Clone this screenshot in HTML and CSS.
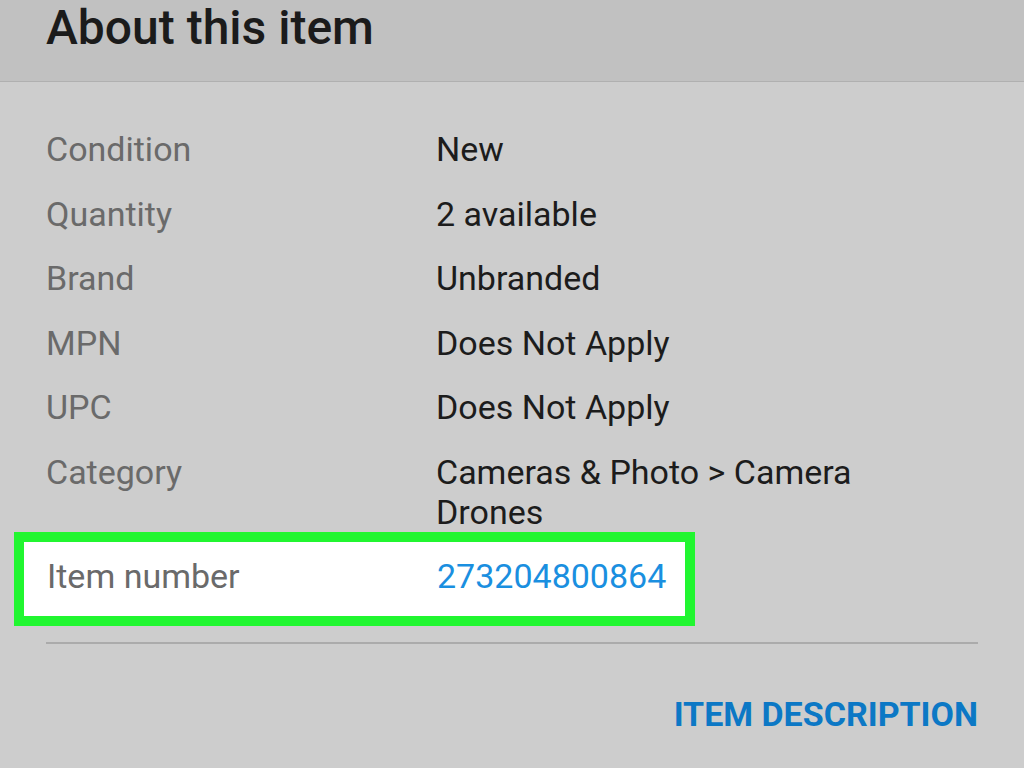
FILE: index.html
```html
<!DOCTYPE html>
<html lang="en">
<head>
  <meta charset="UTF-8" />
  <title>About this item</title>
  <link rel="stylesheet" href="styles.css">
</head>
<body>
  <header class="top-bar">
    <h1>About this item</h1>
  </header>

  <main class="details">
    <div class="specs">
      <div class="row">
        <span class="label">Condition</span>
        <span class="value">New</span>
      </div>
      <div class="row">
        <span class="label">Quantity</span>
        <span class="value">2 available</span>
      </div>
      <div class="row">
        <span class="label">Brand</span>
        <span class="value">Unbranded</span>
      </div>
      <div class="row">
        <span class="label">MPN</span>
        <span class="value">Does Not Apply</span>
      </div>
      <div class="row">
        <span class="label">UPC</span>
        <span class="value">Does Not Apply</span>
      </div>
      <div class="row">
        <span class="label">Category</span>
        <span class="value">Cameras &amp; Photo &gt; Camera Drones</span>
      </div>
      <div class="row highlight">
        <span class="label">Item number</span>
        <a class="value link" href="#">273204800864</a>
      </div>
    </div>

    <hr class="divider">

    <div class="more">
      <a href="#" class="more-link">ITEM DESCRIPTION</a>
    </div>
  </main>
</body>
</html>
```

FILE: styles.css
```css
body {
  margin: 0;
  padding: 0;
  font-family: Roboto, "Liberation Sans", sans-serif;
  background: #cdcdcd;
  height: 768px;
  overflow: hidden;
}

.top-bar {
  height: 82px;
  background: #c1c1c1;
  border-bottom: 1px solid #b0b0b0;
  padding: 0 46px;
  box-sizing: border-box;
}

.top-bar h1 {
  margin: 0;
  font-size: 48px;
  font-weight: 500;
  line-height: 56px;
  color: #1b1b1b;
}

.details {
  padding: 47px 46px 0 46px;
}

.specs {
  display: flex;
  flex-direction: column;
  gap: 24.5px;
}

.row {
  display: flex;
  font-size: 34px;
  line-height: 40px;
}

.label {
  width: 390px;
  flex-shrink: 0;
  color: #6a6a6a;
}

.value {
  width: 450px;
  color: #1c1c1c;
}

.highlight {
  align-self: flex-start;
  margin-left: -32px;
  margin-top: -24.5px;
  padding: 14px 19px 20px 23px;
  background: #fff;
  border: 10px solid #21f630;
}

.highlight .value {
  width: auto;
}

.link {
  color: #1a8fe0;
  text-decoration: none;
}

.divider {
  margin: 16px 0 0 0;
  border: 0;
  height: 2px;
  background: #ababab;
}

.more {
  display: flex;
  justify-content: flex-end;
  padding-top: 50px;
}

.more-link {
  font-size: 34px;
  font-weight: 700;
  line-height: 40px;
  color: #0c78c5;
  text-decoration: none;
}
```
